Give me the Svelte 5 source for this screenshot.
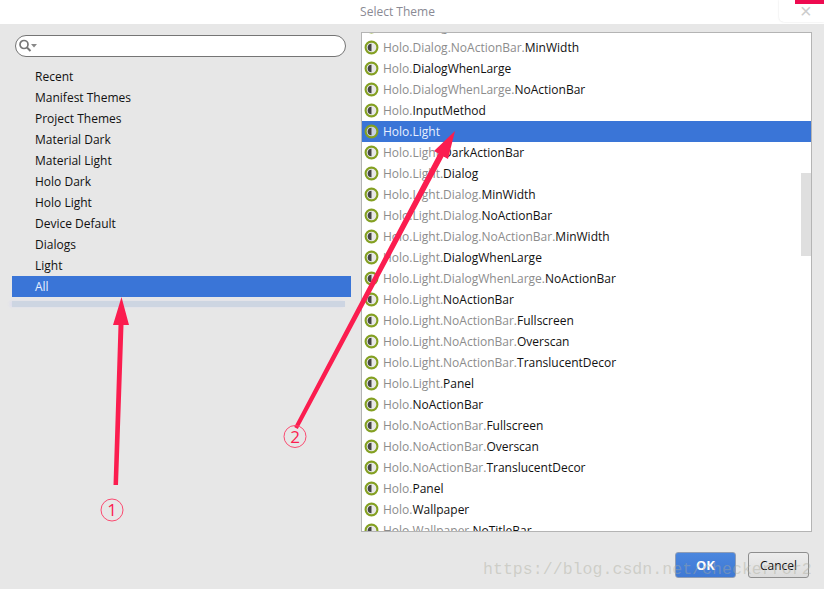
<script>
  const cats = ['Recent','Manifest Themes','Project Themes','Material Dark','Material Light','Holo Dark','Holo Light','Device Default','Dialogs','Light','All'];
  const themes = [
    ['Holo.Dialog.','MinWidth'],
    ['Holo.Dialog.NoActionBar.','MinWidth'],
    ['Holo.','DialogWhenLarge'],
    ['Holo.DialogWhenLarge.','NoActionBar'],
    ['Holo.','InputMethod'],
    ['Holo.Light',''],
    ['Holo.Light.','DarkActionBar'],
    ['Holo.Light.','Dialog'],
    ['Holo.Light.Dialog.','MinWidth'],
    ['Holo.Light.Dialog.','NoActionBar'],
    ['Holo.Light.Dialog.NoActionBar.','MinWidth'],
    ['Holo.Light.','DialogWhenLarge'],
    ['Holo.Light.DialogWhenLarge.','NoActionBar'],
    ['Holo.Light.','NoActionBar'],
    ['Holo.Light.NoActionBar.','Fullscreen'],
    ['Holo.Light.NoActionBar.','Overscan'],
    ['Holo.Light.NoActionBar.','TranslucentDecor'],
    ['Holo.Light.','Panel'],
    ['Holo.','NoActionBar'],
    ['Holo.NoActionBar.','Fullscreen'],
    ['Holo.NoActionBar.','Overscan'],
    ['Holo.NoActionBar.','TranslucentDecor'],
    ['Holo.','Panel'],
    ['Holo.','Wallpaper'],
    ['Holo.Wallpaper.','NoTitleBar']
  ];
</script>

<div class="dialog">
  <header class="title">Select Theme</header>
  <div class="notice"><span class="notice-red"></span><span class="notice-x">×</span></div>

  <main class="body">
    <section class="left">
      <div class="search">
        <svg width="22" height="16" viewBox="0 0 22 16">
          <circle cx="6" cy="6.5" r="4" fill="none" stroke="#777" stroke-width="1.7"/>
          <path d="M9 9.5 L12.500 13" stroke="#777" stroke-width="2"/>
          <path d="M13 6 h6 l-3 3.500 z" fill="#888"/>
        </svg>
      </div>
      <ul class="cats">
        {#each cats as c}
          <li class:sel={c === 'All'}>{c}</li>
        {/each}
      </ul>
      <div class="shadow"></div>
    </section>

    <section class="list">
      <div class="rows">
        {#each themes as t}
          <div class="row" class:sel={t[0] === 'Holo.Light' && !t[1]}>
            <svg class="ico" width="15" height="15" viewBox="0 0 15 15">
              <circle cx="7.5" cy="7.5" r="5.9" fill="#e8e8e8" stroke="#84a022" stroke-width="2.1"/>
              <path d="M7.5 3.700 a3.800 3.800 0 0 0 0 7.600 z" fill="#444"/>
            </svg>
            <span class="pre">{t[0]}</span><span class="name">{t[1]}</span>
          </div>
        {/each}
      </div>
      <div class="thumb"></div>
    </section>
  </main>

  <footer class="foot">
    <button class="ok">OK</button>
    <button class="cancel">Cancel</button>
  </footer>

  <svg class="marks" width="824" height="589" viewBox="0 0 824 589">
    <g fill="#fb1d4f" stroke="none">
      <path d="M113.500 485 L118 485 L123.500 325 L129 325 L121.500 297 L113 325 L118.500 325 Z"/>
      <path d="M294.200 427 L297.800 429 L443.600 156.400 L448 159 L455 131 L434 151 L438.400 153.600 Z"/>
    </g>
    <g fill="none" stroke="#fb4a70" stroke-width="1">
      <circle cx="112" cy="510" r="11"/>
      <circle cx="295" cy="436.500" r="11"/>
    </g>
    <text x="112" y="516" class="num">1</text>
    <text x="295" y="442.500" class="num">2</text>
  </svg>
  <div class="wm">https://blog.csdn.net/checkerror2</div>
</div>

<style>
  :global(body) { margin: 0; }
  .dialog {
    position: relative;
    width: 824px; height: 589px;
    display: flex; flex-direction: column;
    background: #e7e7e7;
    overflow: hidden;
    font-family: "Open Sans", sans-serif;
    font-size: 12px;
    color: #111;
  }
  .title {
    height: 24px; line-height: 24px;
    background: #fff;
    text-align: center;
    padding-right: 29px;
    color: #8a8a94;
    font-size: 12px;
  }
  .notice {
    position: absolute; top: 0; right: 0;
    width: 45px; height: 22px;
    background: #fff;
    border-radius: 0 0 0 5px;
    box-shadow: 0 0 2px #ddd;
  }
  .notice-red { position: absolute; left: 16px; top: 0; width: 29px; height: 4px; background: #ee0a50; }
  .notice-x { position: absolute; left: 21px; top: 1px; font-size: 20px; line-height: 20px; color: #ccc; font-family: "Liberation Sans", sans-serif; }
  .body { flex: 1; display: flex; min-height: 0; padding-top: 8px; }
  .left { width: 361px; flex: none; }
  .search {
    margin: 3px 0 0 15px;
    width: 327px; height: 20px;
    border: 1px solid #757575;
    border-radius: 11px;
    background: #fff;
    display: flex; align-items: center;
    padding-left: 2px;
  }
  .search svg { display: block; }
  .cats { list-style: none; margin: 9px 0 0 12px; padding: 0; width: 339px; }
  .cats li { height: 21px; line-height: 21px; padding-left: 23px; }
  .cats li.sel { background: #3a75d7; color: #e8f0ff; }
  .shadow {
    margin: 4px 0 0 12px; width: 333px; height: 6px;
    background: #cdd5e2;
    box-shadow: -2px 0 3px #dde;
  }
  .list {
    position: relative;
    width: 449px; height: 498px;
    border: 1px solid #b4b4b4;
    background: #fff;
    overflow: hidden;
  }
  .rows { margin-top: -17px; }
  .row { height: 21px; line-height: 21px; display: flex; align-items: center; padding-left: 2px; white-space: pre; }
  .ico { flex: none; margin-right: 4px; }
  .pre { color: #8c8c8c; }
  .name { color: #111; }
  .row.sel { background: #3a75d7; }
  .row.sel .pre { color: #e8f0ff; }
  .row.sel .ico circle { fill: #c9d2e2; }
  .thumb { position: absolute; right: 0; top: 140px; width: 10px; height: 83px; background: #dfdfdf; }
  .foot { height: 57px; flex: none; display: flex; justify-content: flex-end; gap: 12px; padding: 20px 15px 0 0; box-sizing: border-box; align-items: flex-start; }
  .foot button {
    width: 61px; height: 26px;
    border-radius: 3px;
    font-family: inherit; font-size: 12px;
    padding: 0;
  }
  .foot .ok { background: linear-gradient(#4a86de, #3f79d4); border: 1px solid #8f9db5; color: #fff; font-weight: 700; font-size: 13px; }
  .cancel { background: linear-gradient(#ededed, #dcdcdc); border: 1px solid #8e8e8e; color: #111; }
  .marks { position: absolute; inset: 0; pointer-events: none; }
  .num { font-family: "Open Sans", sans-serif; font-size: 17px; fill: #fb1d4f; text-anchor: middle; }
  .wm {
    position: absolute; left: 483px; top: 560px;
    font-family: "Liberation Mono", monospace;
    font-size: 16.600px; line-height: 20px;
    color: rgba(170, 170, 155, 0.42);
    white-space: pre;
  }
</style>
